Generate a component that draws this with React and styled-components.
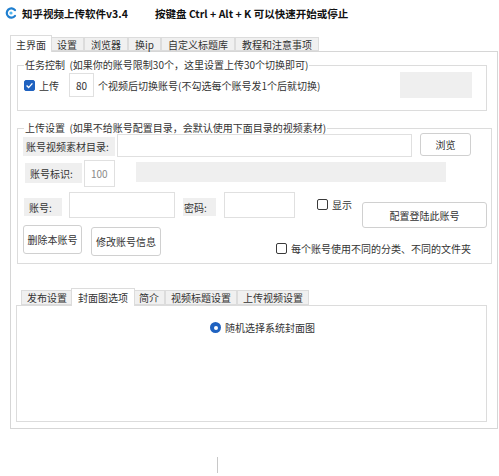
import React from 'react';
import styled, { createGlobalStyle } from 'styled-components';

const GlobalStyle = createGlobalStyle`
  html, body {
    margin: 0;
    padding: 0;
    background: #ffffff;
  }
  body {
    font-family: "Noto Sans CJK SC", "Noto Sans", sans-serif;
    font-size: 10px;
    color: #222;
  }
`;

const Window = styled.div`
  width: 499px;
  height: 476px;
  background: #fff;
  overflow: hidden;
`;

const TitleBar = styled.div`
  height: 26px;
  display: flex;
  align-items: center;
  padding-left: 5px;
  font-weight: 700;
  font-size: 10.5px;
  color: #111;
`;

const AppTitle = styled.div`
  margin-left: 5px;
  width: 133px;
`;

const TabStrip = styled.div`
  display: flex;
  align-items: flex-end;
  margin-top: ${p => p.$top || 0}px;
  padding-left: ${p => p.$left || 0}px;
  height: ${p => p.$height}px;
`;

const Tab = styled.div`
  position: relative;
  z-index: ${p => (p.$active ? 2 : 1)};
  box-sizing: border-box;
  height: ${p => (p.$active ? p.$h + 3 : p.$h)}px;
  margin-bottom: ${p => (p.$active ? -1 : 0)}px;
  padding: 0 ${p => p.$pad}px;
  display: flex;
  align-items: center;
  background: ${p => (p.$active ? '#fff' : '#f0f0f0')};
  border: 1px solid #dcdcdc;
  border-bottom: ${p => (p.$active ? 'none' : '1px solid #dcdcdc')};
  margin-left: ${p => (p.$active ? -2 : 0)}px;
  margin-right: ${p => (p.$active ? -2 : 0)}px;
  color: #333;
  white-space: nowrap;
`;

const MainPanel = styled.div`
  box-sizing: border-box;
  margin-left: 10px;
  width: 488px;
  height: 378px;
  border: 1px solid #d6d6d6;
  background: #fff;
  padding-top: 7px;
`;

const Group = styled.fieldset`
  box-sizing: border-box;
  margin: ${p => p.$top || 0}px 0 0 6px;
  width: ${p => p.$width}px;
  height: ${p => p.$height}px;
  border: 1px solid #dcdcdc;
  padding: 0 0 0 ${p => p.$padLeft}px;
  min-width: 0;
`;

const Legend = styled.legend`
  padding: 0 1px;
  line-height: 12px;
  font-size: 10px;
  color: #333;
  margin-left: ${p => p.$shift || 0}px;
  white-space: pre;
`;

const Row = styled.div`
  display: flex;
  align-items: ${p => p.$align || 'flex-start'};
  height: ${p => p.$height}px;
  margin-top: ${p => p.$top || 0}px;
`;

const Label = styled.div`
  box-sizing: border-box;
  margin: ${p => p.$top || 0}px 0 0 ${p => p.$left || 0}px;
  width: ${p => p.$width}px;
  height: ${p => p.$height}px;
  background: #efefef;
  padding-left: ${p => p.$pad ?? 3}px;
  display: flex;
  align-items: center;
  color: #333;
  white-space: nowrap;
`;

const Field = styled.div`
  box-sizing: border-box;
  margin: ${p => p.$top || 0}px 0 0 ${p => p.$left || 0}px;
  width: ${p => p.$width}px;
  height: ${p => p.$height}px;
  background: #fff;
  border: 1px solid #e0e0e0;
  display: flex;
  align-items: center;
  justify-content: ${p => (p.$center ? 'center' : 'flex-start')};
  padding-left: ${p => (p.$center ? 0 : 6)}px;
  color: ${p => (p.$muted ? '#8a8a8a' : '#333')};
`;

const GreyBlock = styled.div`
  margin: ${p => p.$top || 0}px ${p => p.$right || 0}px 0 ${p => (p.$auto ? 'auto' : `${p.$left || 0}px`)};
  width: ${p => p.$width}px;
  height: ${p => p.$height}px;
  background: #efefef;
`;

const Button = styled.div`
  box-sizing: border-box;
  margin: ${p => p.$top || 0}px 0 0 ${p => p.$left || 0}px;
  width: ${p => p.$width}px;
  height: ${p => p.$height}px;
  background: #fff;
  border: 1px solid #d0d0d0;
  border-radius: 3px;
  display: flex;
  align-items: center;
  justify-content: center;
  color: #333;
  white-space: nowrap;
`;

const Check = styled.label`
  display: flex;
  align-items: center;
  gap: 4px;
  margin: ${p => p.$top || 0}px 0 0 ${p => p.$left || 0}px;
  color: #333;
  white-space: nowrap;
`;

const Box = styled.span`
  box-sizing: border-box;
  width: 11px;
  height: 11px;
  border-radius: 2px;
  border: 1px solid ${p => (p.$on ? '#1f62c0' : '#3a3a3a')};
  background: ${p => (p.$on ? '#1f62c0' : '#fff')};
  display: flex;
  align-items: center;
  justify-content: center;
`;

const Text = styled.span`
  margin-left: ${p => p.$left || 0}px;
  white-space: nowrap;
  color: #333;
`;

const InnerPanel = styled.div`
  box-sizing: border-box;
  margin-left: 5px;
  width: 471px;
  height: 117px;
  border: 1px solid #dcdcdc;
  background: #fff;
  padding: 14px 0 0 193px;
`;

const Radio = styled.span`
  box-sizing: border-box;
  width: 11px;
  height: 11px;
  border-radius: 50%;
  background: #1f62c0;
  display: flex;
  align-items: center;
  justify-content: center;

  &::after {
    content: '';
    width: 4px;
    height: 4px;
    border-radius: 50%;
    background: #fff;
  }
`;

const Divider = styled.div`
  margin: 28px 0 0 217px;
  width: 1px;
  height: 16px;
  background: #c8c8c8;
`;

const AppIcon = () => (
  <svg width="12" height="12" viewBox="0 0 12 12">
    <path d="M10 3.2 A4.6 4.6 0 1 0 10 8.8" fill="none" stroke="#1f7fd0" strokeWidth="2.2" strokeLinecap="round" />
    <circle cx="6" cy="6" r="1.6" fill="#4fb4ee" />
  </svg>
);

const Tick = () => (
  <svg width="9" height="9" viewBox="0 0 9 9">
    <path d="M1.6 4.6 L3.6 6.6 L7.4 2.4" fill="none" stroke="#fff" strokeWidth="1.4" />
  </svg>
);

const mainTabs = ['主界面', '设置', '浏览器', '换ip', '自定义标题库', '教程和注意事项'];
const subTabs = ['发布设置', '封面图选项', '简介', '视频标题设置', '上传视频设置'];

export default function App() {
  return (
    <Window>
      <GlobalStyle />
      <TitleBar>
        <AppIcon />
        <AppTitle>知乎视频上传软件v3.4</AppTitle>
        <span>按键盘 Ctrl + Alt + K 可以快速开始或停止</span>
      </TitleBar>

      <TabStrip $top={9} $left={12} $height={16}>
        {mainTabs.map((t, i) => (
          <Tab key={t} $active={i === 0} $h={14} $pad={i === 0 ? 5 : 6}>{t}</Tab>
        ))}
      </TabStrip>

      <MainPanel>
        <Group $width={470} $height={52} $padLeft={6}>
          <Legend>{'任务控制  (如果你的账号限制30个，这里设置上传30个切换即可)'}</Legend>
          <Row $height={26} $top={1} $align="center">
            <Check>
              <Box $on><Tick /></Box>
              <span>上传</span>
            </Check>
            <Field $left={10} $width={25} $height={24} $center>80</Field>
            <Text $left={4}>个视频后切换账号(不勾选每个账号发1个后就切换)</Text>
            <GreyBlock $auto $right={14} $width={72} $height={26} />
          </Row>
        </Group>

        <Group $top={11} $width={475} $height={142} $padLeft={5}>
          <Legend $shift={1}>{'上传设置  (如果不给账号配置目录，会默认使用下面目录的视频素材)'}</Legend>
          <Row $height={24} $top={-1}>
            <Label $top={4} $width={92} $height={19}>账号视频素材目录:</Label>
            <Field $top={1} $left={2} $width={295} $height={23} />
            <Button $left={8} $width={51} $height={23}>浏览</Button>
          </Row>
          <Row $height={27} $top={3}>
            <Label $top={3} $left={2} $width={57} $height={20} $pad={5}>账号标识:</Label>
            <Field $left={2} $width={31} $height={27} $muted>100</Field>
            <GreyBlock $top={2} $left={21} $width={310} $height={20} />
          </Row>
          <Row $height={30} $top={5}>
            <Label $top={6} $left={1} $width={38} $height={18} $pad={5}>账号:</Label>
            <Field $left={7} $width={106} $height={26} />
            <Label $top={6} $left={8} $width={33} $height={18} $pad={1}>密码:</Label>
            <Field $left={8} $width={71} $height={26} />
            <Check $top={5} $left={22}>
              <Box />
              <span>显示</span>
            </Check>
            <Button $top={10} $left={10} $width={125} $height={26}>配置登陆此账号</Button>
          </Row>
          <Row $height={31} $top={3}>
            <Button $width={59} $height={29}>删除本账号</Button>
            <Button $top={2} $left={9} $width={70} $height={29}>修改账号信息</Button>
            <Check $top={16} $left={115}>
              <Box />
              <span>每个账号使用不同的分类、不同的文件夹</span>
            </Check>
          </Row>
        </Group>

        <TabStrip $top={23} $left={10} $height={18}>
          {subTabs.map((t, i) => (
            <Tab key={t} $active={i === 1} $h={15} $pad={i === 1 ? 6 : 5}>{t}</Tab>
          ))}
        </TabStrip>
        <InnerPanel>
          <Check>
            <Radio />
            <span>随机选择系统封面图</span>
          </Check>
        </InnerPanel>
      </MainPanel>

      <Divider />
    </Window>
  );
}
